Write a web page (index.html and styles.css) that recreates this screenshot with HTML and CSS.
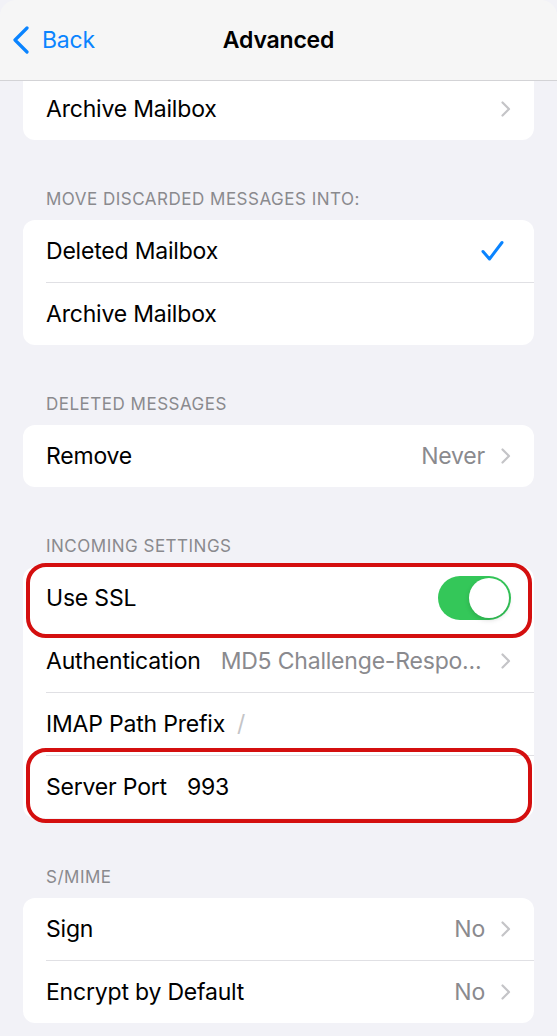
FILE: index.html
```html
<!DOCTYPE html>
<html lang="en">
  <head>
    <meta charset="UTF-8" />
    <meta name="viewport" content="width=device-width, initial-scale=1.0" />
    <title>Advanced</title>
    <link rel="stylesheet" href="styles.css">
  </head>
  <body>
    <header class="nav">
      <a href="#" class="nav-back">
        <svg width="18" height="28" viewBox="0 0 18 28">
          <polyline points="15,2 3,14 15,26" fill="none" stroke="#0a84ff" stroke-width="3.2" stroke-linecap="round" stroke-linejoin="round" />
        </svg>
        <span>Back</span>
      </a>
      <h1 class="nav-title">Advanced</h1>
      <div></div>
    </header>

    <main class="content">
      <div class="card card-first">
        <div class="row">
          <span class="label">Archive Mailbox</span>
          <span class="chevron"></span>
        </div>
      </div>

      <h2 class="section-title">Move discarded messages into:</h2>
      <div class="card">
        <div class="row">
          <span class="label">Deleted Mailbox</span>
          <svg class="check" width="24" height="22" viewBox="0 0 24 22">
            <polyline points="2,11.5 8.5,19 21,2.5" fill="none" stroke="#0a84ff" stroke-width="3" stroke-linecap="round" stroke-linejoin="round" />
          </svg>
        </div>
        <div class="row">
          <span class="label">Archive Mailbox</span>
        </div>
      </div>

      <h2 class="section-title">Deleted messages</h2>
      <div class="card">
        <div class="row">
          <span class="label">Remove</span>
          <span class="value">Never</span>
          <span class="chevron"></span>
        </div>
      </div>

      <h2 class="section-title">Incoming settings</h2>
      <div class="card">
        <div class="row row-marked">
          <span class="label">Use SSL</span>
          <span class="switch on"><span class="knob"></span></span>
        </div>
        <div class="row">
          <span class="label">Authentication</span>
          <span class="value value-fill">MD5 Challenge-Respo...</span>
          <span class="chevron"></span>
        </div>
        <div class="row">
          <span class="label">IMAP Path Prefix</span>
          <span class="field placeholder">/</span>
        </div>
        <div class="row row-marked row-marked-last">
          <span class="label">Server Port</span>
          <span class="field">993</span>
        </div>
      </div>

      <h2 class="section-title">S/MIME</h2>
      <div class="card">
        <div class="row">
          <span class="label">Sign</span>
          <span class="value">No</span>
          <span class="chevron"></span>
        </div>
        <div class="row">
          <span class="label">Encrypt by Default</span>
          <span class="value">No</span>
          <span class="chevron"></span>
        </div>
      </div>
    </main>
  </body>
</html>
```

FILE: styles.css
```css
html {
  background: #ffffff;
}
body {
  margin: 0;
  font-family: Inter, "Noto Sans", sans-serif;
  color: #000;
  background: #f2f2f7;
  min-height: 100vh;
  overflow: hidden;
}
.nav {
  position: relative;
  z-index: 2;
  display: grid;
  grid-template-columns: 1fr auto 1fr;
  align-items: center;
  height: 80px;
  background: #f6f6f6;
  border-bottom: 1px solid #d3d3d6;
  border-radius: 16px 16px 0 0;
}
.nav-back {
  display: flex;
  align-items: center;
  gap: 12px;
  padding-left: 12px;
  color: #0a84ff;
  text-decoration: none;
  font-size: 23px;
  letter-spacing: -0.2px;
}
.nav-title {
  margin: 0;
  font-size: 23px;
  font-weight: 600;
  letter-spacing: -0.2px;
}
.content {
  padding: 0 23px 40px;
}
.card {
  background: #fff;
  border-radius: 12px;
}
.card-first {
  margin-top: -3px;
  border-radius: 0 0 12px 12px;
}
.section-title {
  margin: 49px 0 11px 23px;
  font-size: 17px;
  line-height: 20px;
  font-weight: 400;
  letter-spacing: 0.5px;
  text-transform: uppercase;
  color: #8a8a8e;
}
.row {
  position: relative;
  display: flex;
  align-items: center;
  height: 62px;
  padding: 0 23px;
  font-size: 23px;
  letter-spacing: -0.2px;
}
.row + .row::before {
  content: "";
  position: absolute;
  top: -1px;
  left: 23px;
  right: 0;
  height: 1px;
  background: #e0e0e4;
}
.row + .row {
  margin-top: 1px;
}
.row-marked + .row::before {
  display: none;
}
.label {
  flex-shrink: 0;
}
.value {
  margin-left: auto;
  color: #8a8a8e;
  white-space: nowrap;
}
.value-fill {
  margin-left: 20px;
  flex: 1;
}
.chevron {
  width: 10px;
  height: 16px;
  margin-left: 16px;
  flex-shrink: 0;
  background: no-repeat center / 10px 16px;
  background-image: url("data:image/svg+xml,%3Csvg xmlns='http://www.w3.org/2000/svg' viewBox='0 0 10 16'%3E%3Cpolyline points='1.5,1.5 8,8 1.5,14.5' fill='none' stroke='%23c4c4c7' stroke-width='2.2' stroke-linecap='round' stroke-linejoin='round'/%3E%3C/svg%3E");
}
.row > .label + .chevron {
  margin-left: auto;
}
.check {
  margin-left: auto;
  margin-right: 6px;
}
.field {
  margin-left: 20px;
}
.placeholder {
  color: #c4c4c7;
  margin-left: 12px;
}
.switch {
  margin-left: auto;
  position: relative;
  width: 73px;
  height: 44px;
  border-radius: 22px;
  background: #34c759;
}
.switch .knob {
  position: absolute;
  top: 2px;
  right: 2px;
  width: 40px;
  height: 40px;
  border-radius: 50%;
  background: #fff;
  box-shadow: 0 2px 5px rgba(0, 0, 0, 0.15);
}
.row-marked::after {
  content: "";
  position: absolute;
  top: -4px;
  bottom: -9px;
  left: 3px;
  right: 2px;
  border: 4px solid #d40f0f;
  border-radius: 20px;
  pointer-events: none;
}
.row-marked-last::after {
  top: -8px;
  bottom: -5px;
}
```
